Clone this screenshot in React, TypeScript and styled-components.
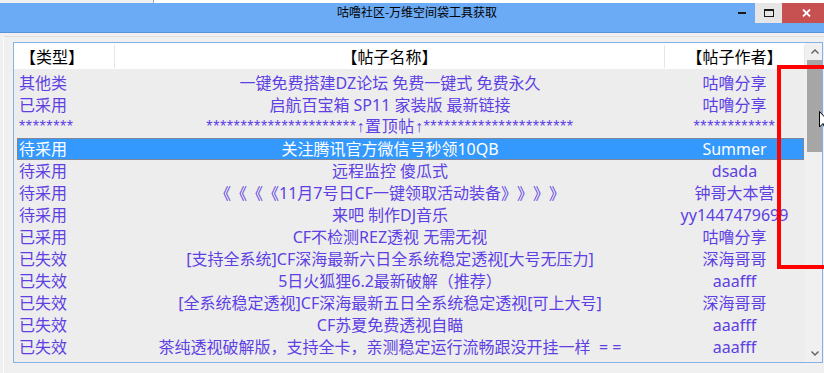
import React from "react"
import styled, { createGlobalStyle } from "styled-components"

type Post = {
	type: string
	title: string
	author: string
	selected?: boolean
	stars?: boolean
}

const posts: Post[] = [
	{ type: "其他类", title: "一键免费搭建DZ论坛 免费一键式 免费永久", author: "咕噜分享" },
	{ type: "已采用", title: "启航百宝箱 SP11 家装版 最新链接", author: "咕噜分享" },
	{
		type: "********",
		title: "**********************↑置顶帖↑**********************",
		author: "************",
		stars: true,
	},
	{ type: "待采用", title: "关注腾讯官方微信号秒领10QB", author: "Summer", selected: true },
	{ type: "待采用", title: "远程监控 傻瓜式", author: "dsada" },
	{ type: "待采用", title: "《《《《11月7号日CF一键领取活动装备》》》》", author: "钟哥大本营" },
	{ type: "待采用", title: "来吧 制作DJ音乐", author: "yy1447479699" },
	{ type: "已采用", title: "CF不检测REZ透视 无需无视", author: "咕噜分享" },
	{ type: "已失效", title: "[支持全系统]CF深海最新六日全系统稳定透视[大号无压力]", author: "深海哥哥" },
	{ type: "已失效", title: "5日火狐狸6.2最新破解（推荐）", author: "aaafff" },
	{ type: "已失效", title: "[全系统稳定透视]CF深海最新五日全系统稳定透视[可上大号]", author: "深海哥哥" },
	{ type: "已失效", title: "CF苏夏免费透视自瞄", author: "aaafff" },
	{ type: "已失效", title: "茶纯透视破解版，支持全卡，亲测稳定运行流畅跟没开挂一样  = =", author: "aaafff" },
]

const GlobalStyle = createGlobalStyle`
	html, body {
		margin: 0;
		padding: 0;
		background: #f0f0f0;
	}
	body {
		font-family: "Noto Sans", "Noto Sans CJK SC", sans-serif;
		text-spacing-trim: space-all;
	}
`

const Window = styled.div`
	position: relative;
	width: 824px;
	height: 373px;
	overflow: hidden;
	background: #f0f0f0;
	display: flex;
	flex-direction: column;
`

const TopStrip = styled.div`
	height: 3px;
	flex-shrink: 0;
	display: flex;
`

const StripLeft = styled.div`
	width: 153px;
	background: #f0f0f0;
	border-right: 1px solid #a9a9a9;
`

const StripRight = styled.div`
	flex: 1;
	background: #ffffff;
`

const TitleBar = styled.div`
	height: 29px;
	flex-shrink: 0;
	background: #6baaf4;
	border-bottom: 1px solid #5a94d8;
	display: grid;
	grid-template-columns: 96px 1fr 96px;
	align-items: start;
`

const Title = styled.div`
	grid-column: 2;
	height: 29px;
	line-height: 29px;
	padding-left: 10px;
	text-align: center;
	font: 12px "Noto Sans CJK SC", sans-serif;
	color: #000;
`

const Controls = styled.div`
	display: flex;
	height: 20px;
`

const CtrlButton = styled.div<{ $w: number; $bg?: string; $shift?: number }>`
	width: ${(p) => p.$w}px;
	height: 20px;
	background: ${(p) => p.$bg ?? "transparent"};
	display: flex;
	align-items: center;
	justify-content: center;
	padding-left: ${(p) => p.$shift ?? 0}px;
	box-sizing: border-box;
`

const Body = styled.div`
	flex: 1;
	padding: 3px 0 0 3px;
	display: flex;
	min-height: 0;
`

const Panel = styled.div`
	flex: 1;
	border-top: 1px solid #dedede;
	border-left: 1px solid #fbfbfb;
	padding: 5px 0 0 9px;
`

const ListView = styled.div`
	width: 808px;
	height: 319px;
	border: 1px solid #84b2e6;
	background: #ededed;
	display: flex;
`

const Columns = styled.div`
	flex: 1;
	display: flex;
	flex-direction: column;
	min-width: 0;
`

const Header = styled.div`
	height: 26px;
	flex-shrink: 0;
	background: #ffffff;
	display: grid;
	grid-template-columns: 101px 550px 1fr;
	margin-bottom: 3px;
`

const HeaderCell = styled.div<{ $align: "left" | "center" }>`
	border-right: 1px solid #e1e7ef;
	margin: 2px 0 1px;
	font: 16px / 23px "Noto Sans CJK SC", sans-serif;
	color: #000;
	text-align: ${(p) => p.$align};
	padding-left: ${(p) => (p.$align === "left" ? 6 : 0)}px;
	white-space: nowrap;
`

const Row = styled.div<{ $selected?: boolean; $stars?: boolean }>`
	height: 22px;
	margin: 0 1px 0 3px;
	display: grid;
	grid-template-columns: 98px 550px 1fr;
	font-size: 16px;
	line-height: 22px;
	font-family: ${(p) =>
		p.$stars ? `"Liberation Sans", "Noto Sans CJK SC", sans-serif` : `"Noto Sans", "Noto Sans CJK SC", sans-serif`};
	letter-spacing: ${(p) => (p.$stars ? "0.6px" : "0")};
	color: ${(p) => (p.$selected ? "#ffffff" : "#5d3fe4")};
	background: ${(p) => (p.$selected ? "#3399ff" : "transparent")};
	outline: ${(p) => (p.$selected ? "1px dotted #c87533" : "none")};
	outline-offset: -1px;
`

const Cell = styled.div<{ $align: "left" | "center" }>`
	text-align: ${(p) => p.$align};
	padding-left: ${(p) => (p.$align === "left" ? 2 : 0)}px;
	white-space: pre;
	overflow: hidden;
`

const ScrollBar = styled.div`
	width: 17px;
	flex-shrink: 0;
	background: #f0f0f0;
	display: flex;
	flex-direction: column;
`

const ArrowButton = styled.div`
	height: 17px;
	display: flex;
	align-items: center;
	justify-content: center;
	padding-left: 2px;
`

const Track = styled.div`
	flex: 1;
	padding-left: 2px;
	display: flex;
	flex-direction: column;
`

const Thumb = styled.div`
	height: 92px;
	background: #a6a6a6;
`

const Annotation = styled.div`
	position: absolute;
	left: 777px;
	top: 65px;
	width: 60px;
	height: 204px;
	border: 4px solid #ff0000;
	box-sizing: border-box;
	pointer-events: none;
`

const Cursor = styled.svg`
	position: absolute;
	left: 819px;
	top: 111px;
`

const Chevron = ({ up }: { up: boolean }) => (
	<svg width="8" height="5" viewBox="0 0 8 5">
		<polyline
			points={up ? "0.5,4.5 4,1 7.5,4.5" : "0.5,0.5 4,4 7.5,0.5"}
			fill="none"
			stroke="#606060"
			strokeWidth="1.4"
		/>
	</svg>
)

export default function App() {
	return (
		<>
			<GlobalStyle />
			<Window>
				<TopStrip>
					<StripLeft />
					<StripRight />
				</TopStrip>
				<TitleBar>
					<Title>咕噜社区-万维空间袋工具获取</Title>
					<Controls>
						<CtrlButton $w={27}>
							<svg width="8" height="2" viewBox="0 0 8 2">
								<rect width="8" height="2" fill="#1a1a1a" />
							</svg>
						</CtrlButton>
						<CtrlButton $w={27} $bg="#e6e6e6">
							<svg width="10" height="8" viewBox="0 0 10 8">
								<rect x="0.5" y="1" width="9" height="6.5" fill="none" stroke="#1a1a1a" strokeWidth="1" />
								<rect x="0" y="0" width="10" height="2" fill="#1a1a1a" />
							</svg>
						</CtrlButton>
						<CtrlButton $w={42} $bg="#c75050" $shift={6}>
							<svg width="9" height="8" viewBox="0 0 9 8">
								<path d="M1 0.5 L8 7.5 M8 0.5 L1 7.5" stroke="#ffffff" strokeWidth="1.8" />
							</svg>
						</CtrlButton>
					</Controls>
				</TitleBar>
				<Body>
					<Panel>
						<ListView>
							<Columns>
								<Header>
									<HeaderCell $align="left">【类型】</HeaderCell>
									<HeaderCell $align="center">【帖子名称】</HeaderCell>
									<HeaderCell $align="center">【帖子作者】</HeaderCell>
								</Header>
								{posts.map((p, i) => (
									<Row key={i} $selected={p.selected} $stars={p.stars}>
										<Cell $align="left">{p.type}</Cell>
										<Cell $align="center">{p.title}</Cell>
										<Cell $align="center">{p.author}</Cell>
									</Row>
								))}
							</Columns>
							<ScrollBar>
								<ArrowButton>
									<Chevron up />
								</ArrowButton>
								<Track>
									<Thumb />
								</Track>
								<ArrowButton>
									<Chevron up={false} />
								</ArrowButton>
							</ScrollBar>
						</ListView>
					</Panel>
				</Body>
				<Annotation />
				<Cursor width="12" height="20" viewBox="0 0 12 20">
					<path d="M0.5 0.5 L0.5 16 L4 12.5 L6.5 18.5 L8.5 17.5 L6 11.8 L11 11.8 Z" fill="#ffffff" stroke="#000000" strokeWidth="1" />
				</Cursor>
			</Window>
		</>
	)
}
